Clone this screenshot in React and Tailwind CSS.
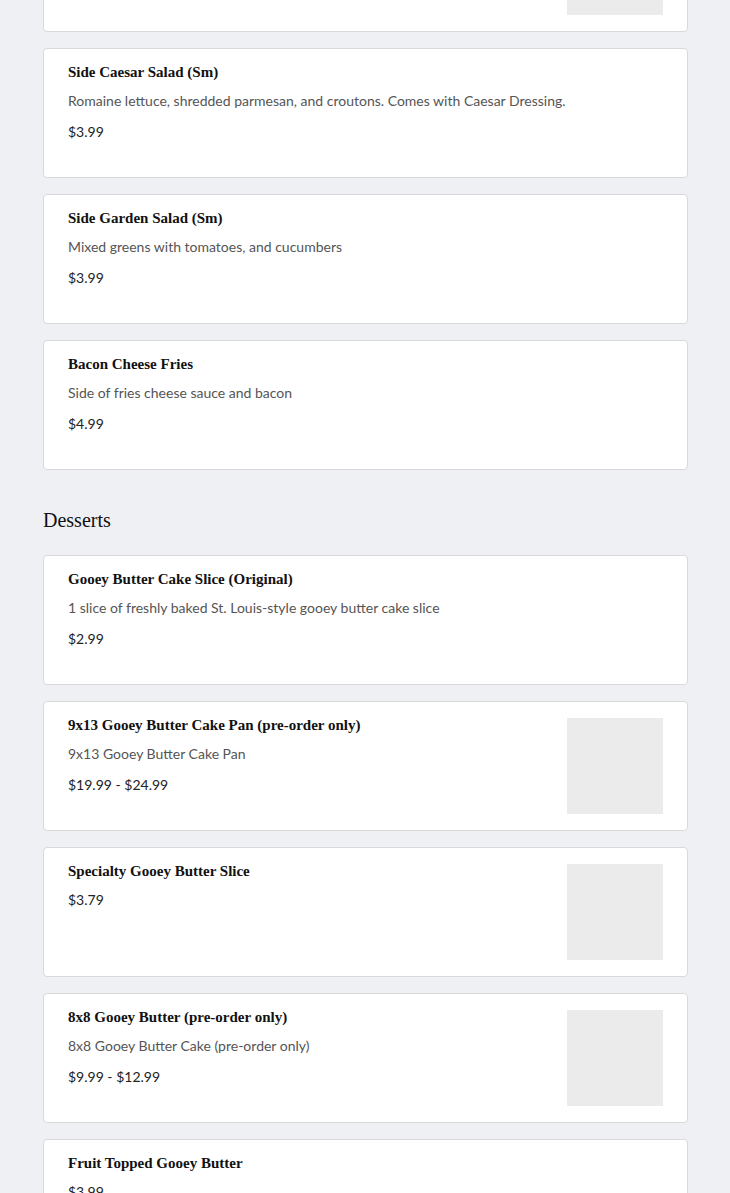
const sides = [
  { img: true },
  { name: "Side Caesar Salad (Sm)", desc: "Romaine lettuce, shredded parmesan, and croutons. Comes with Caesar Dressing.", price: "$3.99" },
  { name: "Side Garden Salad (Sm)", desc: "Mixed greens with tomatoes, and cucumbers", price: "$3.99" },
  { name: "Bacon Cheese Fries", desc: "Side of fries cheese sauce and bacon", price: "$4.99" },
];

const desserts = [
  { name: "Gooey Butter Cake Slice (Original)", desc: "1 slice of freshly baked St. Louis-style gooey butter cake slice", price: "$2.99" },
  { name: "9x13 Gooey Butter Cake Pan (pre-order only)", desc: "9x13 Gooey Butter Cake Pan", price: "$19.99 - $24.99", img: true },
  { name: "Specialty Gooey Butter Slice", price: "$3.79", img: true },
  { name: "8x8 Gooey Butter (pre-order only)", desc: "8x8 Gooey Butter Cake (pre-order only)", price: "$9.99 - $12.99", img: true },
  { name: "Fruit Topped Gooey Butter", price: "$3.99" },
];

const ItemCard = ({ item }) => {
  return (
    <div className="bg-white border border-[#d9d9d9] rounded-[4px] h-[130px] px-6 py-4 flex justify-between">
      <div className="flex-1">
        {item.name && (
          <h3 className="font-['Liberation_Serif',serif] font-bold text-[15px] leading-[14px] text-[#111]">{item.name}</h3>
        )}
        {item.desc && (
          <p className="mt-3 text-[14px] leading-5 text-[#555]">{item.desc}</p>
        )}
        {item.price && (
          <p className={(item.desc ? "mt-[11px]" : "mt-3") + " text-[14px] leading-5 text-[#222]"}>{item.price}</p>
        )}
      </div>
      {item.img && <div className="w-24 h-24 bg-[#ebebeb] shrink-0 ml-4"></div>}
    </div>
  );
};

export default function App() {
  return (
    <div className="min-h-[1193px] bg-[#eef0f4] overflow-hidden font-['Lato','Liberation_Sans',sans-serif]">
      <div className="ml-[43px] mr-[42px] -mt-[98px] pb-10">
        <div className="flex flex-col gap-4">
          {sides.map((item, i) => (
            <ItemCard key={i} item={item} />
          ))}
        </div>
        <h2 className="mt-9 mb-[21px] font-['Liberation_Serif',serif] text-[20px] leading-7 text-[#111]">Desserts</h2>
        <div className="flex flex-col gap-4">
          {desserts.map((item) => (
            <ItemCard key={item.name} item={item} />
          ))}
        </div>
      </div>
    </div>
  );
}
